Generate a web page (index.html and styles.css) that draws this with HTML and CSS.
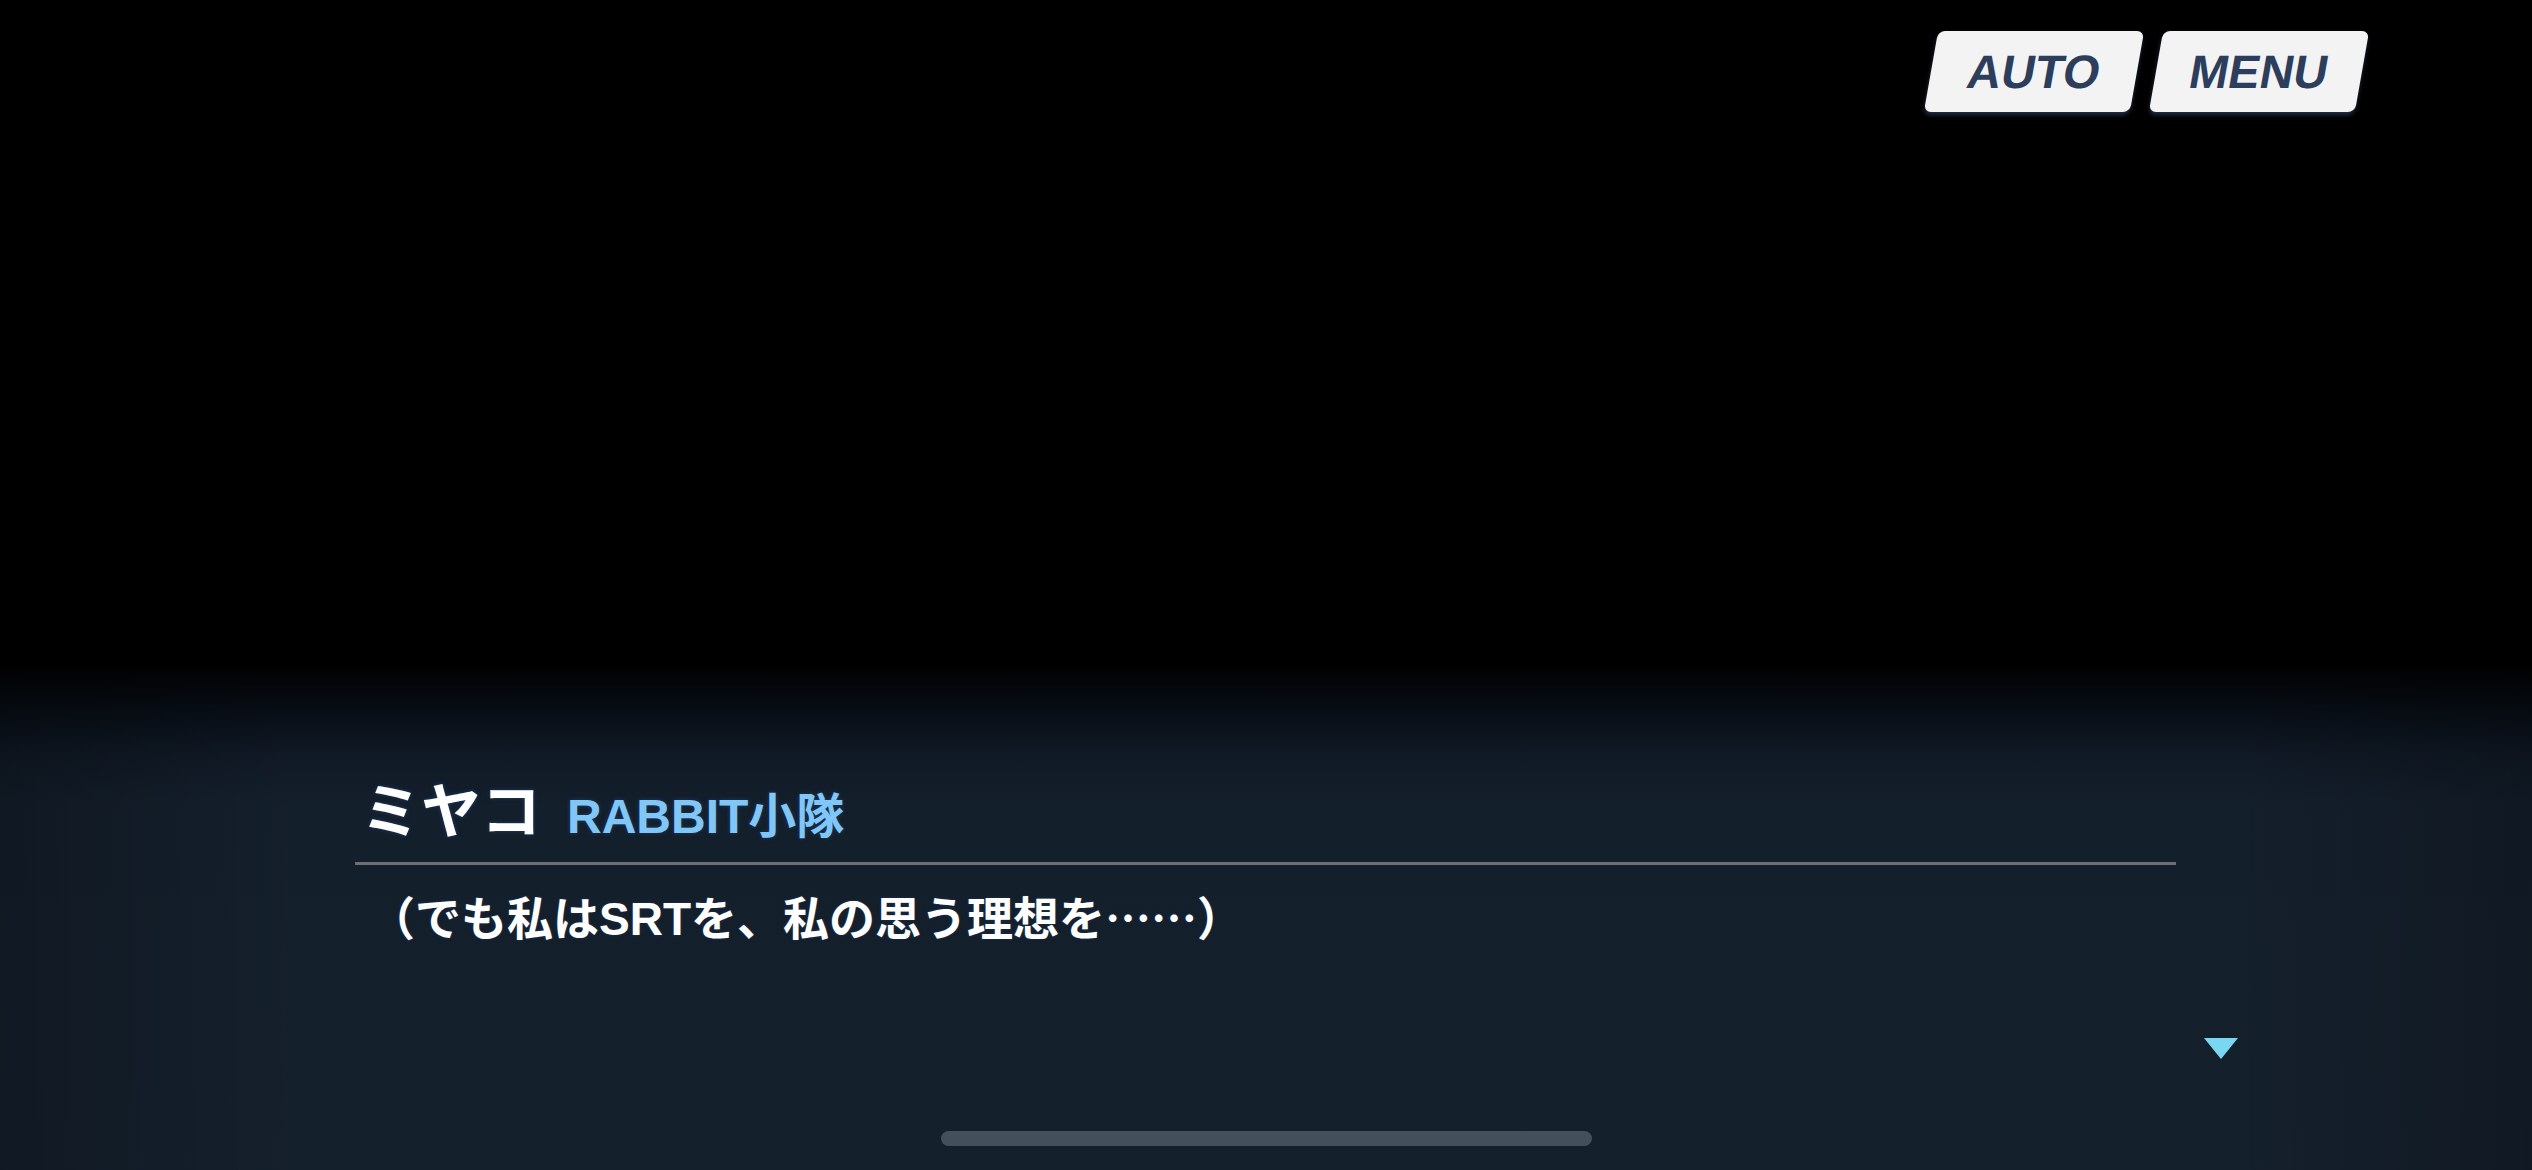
FILE: index.html
```html
<!DOCTYPE html>
<html lang="ja">
<head>
  <meta charset="UTF-8">
  <title>ミヤコ</title>
  <link rel="stylesheet" href="styles.css">
</head>
<body>
  <!-- botões do topo -->
  <div class="top-bar">
    <button class="top-btn">AUTO</button>
    <button class="top-btn">MENU</button>
  </div>

  <div class="dialog">
    <div class="dialog-main">
      <div class="speaker">
        <span class="speaker-name">ミヤコ</span>
        <span class="speaker-team">RABBIT小隊</span>
      </div>
      <div class="dialog-line"></div>
      <p class="dialog-text">（でも私はSRTを、私の思う理想を<span class="cjk">……</span>）</p>
    </div>
    <div class="dialog-side">
      <div class="next-arrow"></div>
    </div>
  </div>

  <div class="home-bar"></div>
</body>
</html>
```

FILE: styles.css
```css
html, body {
  margin: 0;
  height: 100%;
}
body {
  height: 1170px;
  overflow: hidden;
  display: flex;
  flex-direction: column;
  font-family: "Liberation Sans", "Noto Sans CJK JP", sans-serif;
  background:
    linear-gradient(to right, rgba(0,0,0,0.22), rgba(0,0,0,0) 12%, rgba(0,0,0,0) 88%, rgba(0,0,0,0.22)),
    linear-gradient(to bottom, #000 0, #000 665px, #070c13 705px, #101925 755px, #141f2c 805px, #15202d 100%);
}
.top-bar {
  display: flex;
  justify-content: flex-end;
  gap: 19px;
  padding: 31px 170px 0 0;
}
.top-btn {
  width: 206px;
  height: 81px;
  border: none;
  border-radius: 7px;
  background-color: #f3f3f4;
  color: #2c3e5c;
  font-family: "Liberation Sans", Arial, sans-serif;
  font-size: 47px;
  font-weight: bold;
  padding: 0;
  transform: skewX(-10deg);
  box-shadow: 0 3px 4px rgba(70,100,150,0.45);
  cursor: pointer;
}
.dialog {
  margin-top: auto;
  display: flex;
  padding-left: 355px;
}
.dialog-main {
  width: 1821px;
  height: 284px;
}
.speaker {
  display: flex;
  align-items: baseline;
  gap: 26px;
  height: 76px;
  padding-left: 6px;
}
.speaker-name {
  color: #fff;
  font-size: 60px;
  font-weight: bold;
  line-height: 76px;
  text-shadow: 0 0 4px #1f3a5e, 0 0 2px #1f3a5e;
}
.speaker-team {
  color: #80c6f6;
  font-size: 48px;
  font-weight: bold;
  text-shadow: 0 0 4px #1c3a5e;
}
.dialog-line {
  height: 3px;
  background-color: #6b6e73;
  margin-top: 11px;
}
.dialog-text {
  margin: 22px 0 0 14px;
  color: #fff;
  font-size: 46px;
  font-weight: bold;
  line-height: 56px;
  text-shadow: 0 0 3px #1d3553;
}
.cjk {
  font-family: "Noto Sans CJK JP", sans-serif;
}
.dialog-side {
  display: flex;
  align-items: flex-end;
  padding-left: 28px;
}
.next-arrow {
  width: 0;
  height: 0;
  border-left: 17px solid transparent;
  border-right: 17px solid transparent;
  border-top: 21px solid #7ad7f1;
}
.home-bar {
  align-self: center;
  width: 651px;
  height: 15px;
  border-radius: 8px;
  background-color: #454f5b;
  margin: 72px 0 24px;
}
```
